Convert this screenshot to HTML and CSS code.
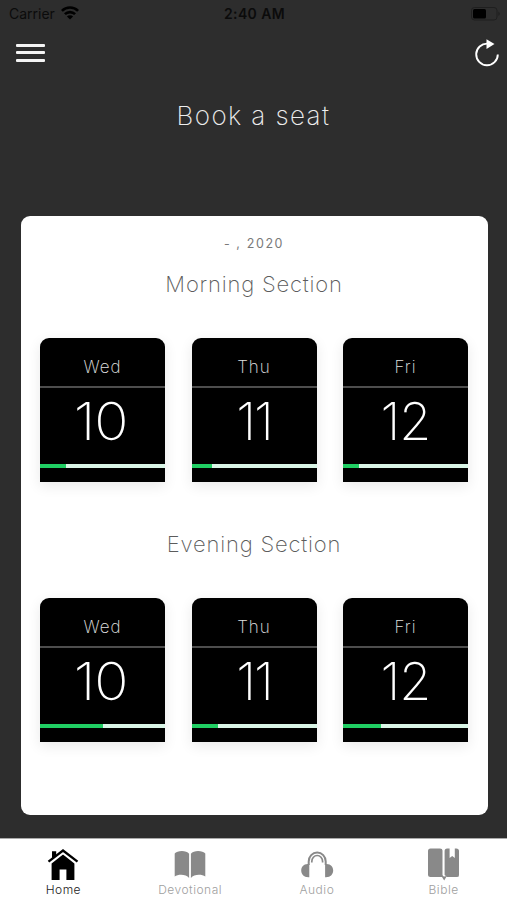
FILE: index.html
```html
<!DOCTYPE html>
<html lang="en">
<head>
<meta charset="utf-8">
<title>Book a seat</title>
<link rel="stylesheet" href="styles.css">
</head>
<body>
<div class="app">
  <div class="status">
    <div class="carrier"><span>Carrier</span>
      <svg width="18" height="14" viewBox="0 0 18 14" fill="none" stroke="#000" stroke-width="2.6"><path d="M.9 4.9a11.5 11.5 0 0 1 16.2 0M3.9 8.2a7.2 7.2 0 0 1 10.2 0"/><path d="M9 13.6 5.9 10.5a4.4 4.4 0 0 1 6.2 0z" fill="#000" stroke="none"/></svg>
    </div>
    <div class="time">2:40 AM</div>
    <svg class="battery" width="30" height="14" viewBox="0 0 30 14"><rect x=".5" y=".5" width="25.500" height="12.500" rx="3" fill="none" stroke="#1f1f1f"/><rect x="2" y="2" width="13" height="9.500" rx="1.500" fill="#000"/><path d="M27.300 4.500q3 2.200 0 4.500z" fill="#1f1f1f"/></svg>
  </div>
  <header class="toolbar">
    <div class="menu"><i></i><i></i><i></i></div>
    <svg width="24" height="28" viewBox="0 0 24 28"><path d="M12.500 4.600A10.800 10.800 0 1 0 22.800 15.400" fill="none" stroke="#fff" stroke-width="1.900"/><path d="M11.500 0.200 19.500 5 11.500 10z" fill="#fff"/></svg>
  </header>
  <h1 class="title">Book a seat</h1>
  <main class="card">
    <div class="date">- , 2020</div>
    <h2 class="section">Morning Section</h2>
    <div class="days">
      <div class="day"><div class="name">Wed</div><div class="num ten">10</div><div class="bar"><b style="width:21%"></b></div></div>
      <div class="day"><div class="name">Thu</div><div class="num eleven">11</div><div class="bar"><b style="width:16%"></b></div></div>
      <div class="day"><div class="name">Fri</div><div class="num">12</div><div class="bar"><b style="width:13%"></b></div></div>
    </div>
    <h2 class="section evening">Evening Section</h2>
    <div class="days">
      <div class="day"><div class="name">Wed</div><div class="num ten">10</div><div class="bar"><b style="width:50%"></b></div></div>
      <div class="day"><div class="name">Thu</div><div class="num eleven">11</div><div class="bar"><b style="width:21%"></b></div></div>
      <div class="day"><div class="name">Fri</div><div class="num">12</div><div class="bar"><b style="width:30%"></b></div></div>
    </div>
  </main>
  <nav class="tabs">
    <div class="tab active">
      <svg width="34" height="34" viewBox="0 0 34 34"><path d="M5.600 15.500 17 6.500 28.400 15.500V32H20.400V21.500H13.600V32H5.600z" fill="#000"/><path d="M6 3.300h4.200v4L6 10.700z" fill="#000"/><path d="M2.700 14.600 17 4 31.300 14.600" fill="none" stroke="#fff" stroke-width="3"/><path d="M2.500 13.600 17 2.600 31.500 13.600" fill="none" stroke="#000" stroke-width="2.400"/></svg>
      <span>Home</span>
    </div>
    <div class="tab">
      <svg width="34" height="34" viewBox="0 0 34 34" fill="#898989"><path d="M1.700 5.500C4 2.300 13.500 2 16.100 5.700V30C13 25.800 5 26 1.700 28.500z"/><path d="M32.300 5.500C30 2.300 20.500 2 17.900 5.700V30C21 25.800 29 26 32.300 28.500z"/></svg>
      <span>Devotional</span>
    </div>
    <div class="tab">
      <svg width="34" height="34" viewBox="0 0 34 34" fill="none" stroke="#898989"><path d="M8.700 17V13.500a8.500 9 0 0 1 17 0V17" stroke-width="2"/><path d="M11.800 14.500v-1a5.400 6 0 0 1 10.800 0v1" stroke-width="1.700"/><path d="M9.300 16V29.200C-1.200 30-1.200 16 7.700 16zM25.100 16V29.200C35.600 30 35.600 16 26.700 16z" fill="#898989" stroke="none"/></svg>
      <span>Audio</span>
    </div>
    <div class="tab">
      <svg width="34" height="34" viewBox="0 0 34 34" fill="#898989"><path d="M3.500.5H13q2.500 0 2.500 2V27q.5 1.500 2 1.500T19.500 27l.5-.5h9.500q2.200 0 2.200 2H19.500L17.200 32.500 15 29H3.500Q1 29 1 26.500V3Q1 .5 3.500.5z"/><path d="M17.600 3q0-2.500 2.500-2.500h2.500V10l2.600-2 2.600 2V.5h1.500q2.700 0 2.700 2.500v23.500q0 2.500-2.500 2.500H20.200l-2.600-2z"/></svg>
      <span>Bible</span>
    </div>
  </nav>
</div>
</body>
</html>
```
FILE: styles.css
```css
* { box-sizing: border-box; }
body { margin: 0; background: #2d2d2d; font-family: Inter, "Liberation Sans", sans-serif; font-weight: 300; }
.app { width: 507px; height: 900px; display: flex; flex-direction: column; overflow: hidden; }
.status { height: 28px; flex: none; display: grid; grid-template-columns: 1fr auto 1fr; align-items: center; padding: 0 7px 0 9px; font: 400 14px/28px Inter, sans-serif; color: #0b0b0b; }
.carrier { display: flex; align-items: center; gap: 6px; }
.carrier svg { margin-top: -2px; }
.time { font-weight: 600; font-size: 14px; letter-spacing: .4px; }
.battery { justify-self: end; margin-right: -1px; }
.toolbar { height: 52px; flex: none; display: flex; justify-content: space-between; align-items: flex-start; padding: 0 8px 0 16.400px; }
.menu { display: flex; flex-direction: column; gap: 4.300px; padding-top: 16px; }
.menu i { width: 29px; height: 3px; border-radius: 1px; background: #f4f4f4; }
.toolbar svg { margin-top: 11px; }
.title { margin: 16px 0 0; flex: none; text-align: center; font-weight: 200; font-size: 26px; line-height: 40px; letter-spacing: 1.4px; color: #eee; }
.card { margin: 80px 19.5px 0 20.500px; height: 599px; flex: none; background: #fff; border-radius: 9px; padding: 17px 19.5px 0; }
.date { text-align: center; font-weight: 400; font-size: 12.5px; line-height: 21px; letter-spacing: 1.6px; color: #7a7a7a; }
.section { margin: 13px 0 0; text-align: center; font-weight: 200; font-size: 22px; line-height: 34px; letter-spacing: .8px; color: #5c5c5c; }
.evening { margin-top: 45px; }
.days { margin-top: 37px; display: flex; justify-content: space-between; }
.day { width: 125px; height: 144px; background: #000; border-radius: 9px 9px 0 0; box-shadow: 0 4px 14px rgba(0,0,0,.09); color: #fff; text-align: center; }
.name { height: 50px; border-bottom: 2px solid #4d4d4d; padding-top: 18px; font-weight: 200; font-size: 17px; line-height: 22px; letter-spacing: 1px; color: #e2e2e2; }
.num { height: 76px; font: 200 52px/68px Inter, sans-serif; letter-spacing: -1px; }
.ten { transform: scaleX(1.09); margin-left: -4px; }
.eleven { letter-spacing: -2px; }
.bar { height: 4px; background: #d9f5e6; }
.bar b { display: block; height: 4px; background: #20ce63; }
.tabs { margin-top: auto; height: 62px; flex: none; background: #fff; border-top: 1px solid #aaa; display: grid; grid-template-columns: repeat(4, 1fr); padding: 9px 0 0 0; }
.tab { display: flex; flex-direction: column; align-items: center; font-weight: 300; font-size: 12px; line-height: 15px; letter-spacing: .5px; color: #a0a0a0; }
.active { color: #222; }
```
